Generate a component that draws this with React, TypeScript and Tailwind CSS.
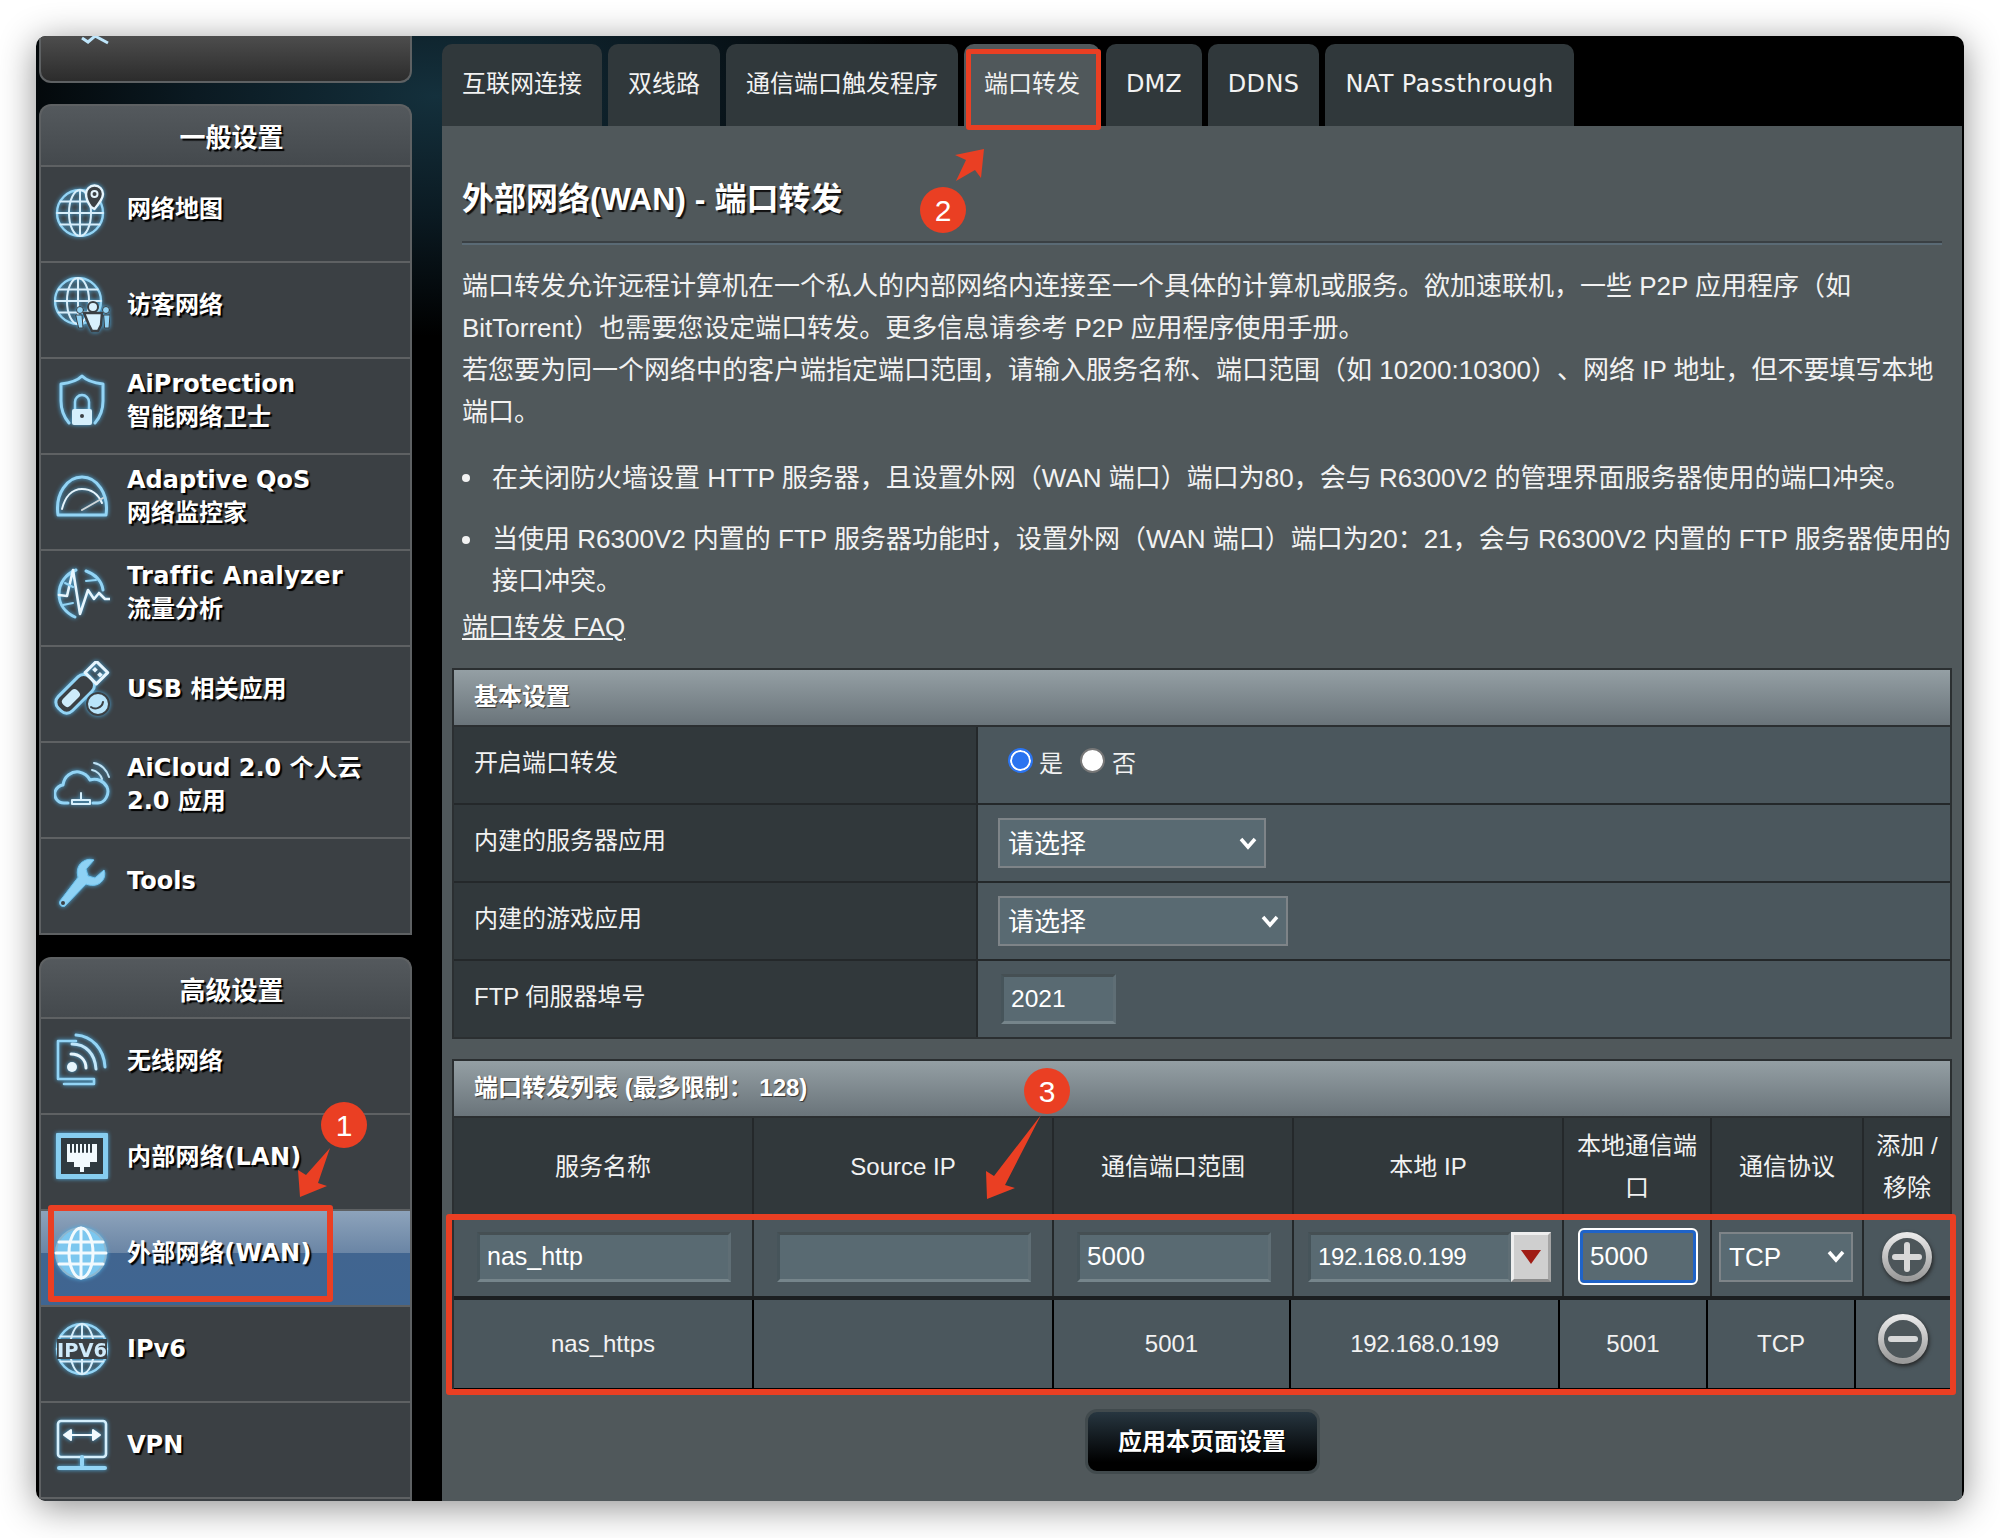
import React from "react";

const blue = "#93d4f5";
const iconCls = "block drop-shadow-[0_0_2px_#4fb0e6]";
const Ic = ({ children }: { children: React.ReactNode }) => (
  <svg width="56" height="56" viewBox="0 0 56 56" fill="none" stroke={blue} strokeWidth="2" strokeLinecap="round" strokeLinejoin="round" className={iconCls}>
    {children}
  </svg>
);
const Grid = ({ cx, cy, r }: { cx: number; cy: number; r: number }) => (
  <>
    <circle cx={cx} cy={cy} r={r} strokeWidth="2.4" />
    <ellipse cx={cx} cy={cy} rx={r * 0.48} ry={r} stroke="#d7eefb" />
    <path d={`M${cx} ${cy - r}V${cy + r}M${cx - r} ${cy}H${cx + r}M${cx - r * 0.85} ${cy - r * 0.5}H${cx + r * 0.85}M${cx - r * 0.85} ${cy + r * 0.5}H${cx + r * 0.85}`} stroke="#d7eefb" />
  </>
);
const icons: Record<string, React.ReactNode> = {
  map: (
    <Ic>
      <Grid cx={26} cy={32} r={23} />
      <path d="M37 26C32 19 32 16 32 13a8.500 8.500 0 0 1 17 0c0 3-1 6-8.500 15z" fill="#3b4044" stroke="#e6f5fd" strokeWidth="2.400" />
      <circle cx="40.500" cy="13" r="3" stroke="#e6f5fd" />
    </Ic>
  ),
  guest: (
    <Ic>
      <Grid cx={24} cy={24} r={23} />
      <circle cx="39" cy="30" r="5" fill="#d9f1fd" stroke="#3b4044" />
      <path d="M30 36h18l-1 12-3 6h-6l-3-6z" fill="#d9f1fd" stroke="#3b4044" strokeWidth="2.500" />
      <circle cx="26" cy="33" r="3.500" fill={blue} stroke="#3b4044" strokeWidth="1" />
      <circle cx="52" cy="33" r="3.500" fill={blue} stroke="#3b4044" strokeWidth="1" />
      <path d="M22 38h6l1 13h-4zM50 38h6l-1 13h-4z" fill={blue} stroke="#3b4044" strokeWidth="1" />
    </Ic>
  ),
  shield: (
    <Ic>
      <path d="M28 3c5 5 12 7 21 8v17c0 9-2 15-8 22M28 3c-5 5-12 7-21 8v17c0 9 2 15 8 22" strokeWidth="3" />
      <path d="M21 36v-7a7 7 0 0 1 14 0v7" strokeWidth="2.500" />
      <rect x="18" y="36" width="20" height="16" rx="2" fill="#d5effc" stroke="none" />
      <circle cx="28" cy="43" r="2" fill="#3b4044" stroke="none" />
    </Ic>
  ),
  qos: (
    <Ic>
      <path d="M4 46h48C55 25 43 8 28 8S1 25 4 46z" strokeWidth="3" />
      <path d="M8 40C11 28 18 20 28 20s16 5 20 14" stroke="#e6f5fd" strokeWidth="2" />
      <path d="M28 41l21-12" stroke="#cfd5d8" strokeWidth="2" />
    </Ic>
  ),
  traffic: (
    <Ic>
      <path d="M22 5C12 9 5 18 5 29c0 11 7 19 16 23M32 6c9 3 16 10 17 19" stroke={blue} strokeWidth="3" />
      <path d="M5 30l8 1 6-26 7 44 8-24 6 9 5-6 6 6h5" stroke="#e6f5fd" strokeWidth="2.600" />
      <path d="M11 18l8 4M32 16l10-1M9 40l10-2" />
    </Ic>
  ),
  usb: (
    <Ic>
      <g transform="rotate(45 24 30)">
        <rect x="14" y="12" width="20" height="44" rx="8" strokeWidth="3" fill="#3b4044" />
        <rect x="19" y="30" width="10" height="20" rx="4" fill="#cdecfb" stroke="none" />
        <rect x="16" y="-4" width="16" height="16" stroke="#e6f5fd" strokeWidth="3" strokeLinecap="square" />
        <rect x="19" y="1" width="4" height="4" fill="#e6f5fd" stroke="none" />
        <rect x="26" y="1" width="4" height="4" fill="#e6f5fd" stroke="none" />
      </g>
      <circle cx="44" cy="43" r="11" fill="#b9e4fa" stroke="#3b4044" strokeWidth="2" />
      <path d="M37 46c4 3 11 1 12-5" stroke="#3b4044" strokeWidth="2" />
    </Ic>
  ),
  cloud: (
    <Ic>
      <path d="M14 46H10C3 46 0 40 1 35c1-4 5-7 8-7 1-9 9-14 16-13 5 1 9 4 11 8 7-2 14 1 17 7 3 7-2 16-9 16h-5" strokeWidth="3" />
      <path d="M38 13c5 1 9 5 10 9M40 6c7 1 13 7 15 14" stroke="#bfe2f5" />
      <path d="M18 47h18v-4H18zM27 43v-7" stroke="#d5effc" />
    </Ic>
  ),
  tools: (
    <Ic>
      <path d="M6 48c-2 3 2 7 5 5l21-22c7 3 15 1 18-6 1-3 1-6 0-8l-9 8-7-2-2-7 8-9c-3-1-7-1-10 1-6 3-8 10-6 16z" fill="#8ed2f5" stroke="#6fc3ee" strokeWidth="1" />
      <circle cx="9" cy="50" r="2" fill="#3b4044" stroke="none" />
    </Ic>
  ),
  wifi: (
    <Ic>
      <path d="M22 8H4v38h36v5H10" strokeWidth="2.600" />
      <circle cx="18" cy="34" r="5" fill="#e6f5fd" stroke="none" />
      <path d="M17 21c9 0 15 6 15 14" stroke="#e6f5fd" strokeWidth="3" />
      <path d="M18 11c14 0 23 10 24 25" stroke="#c0e6fa" strokeWidth="3" />
      <path d="M22 2c16 1 28 14 29 32" strokeWidth="3" />
    </Ic>
  ),
  lan: (
    <Ic>
      <rect x="3" y="5" width="50" height="44" fill="#86cdf0" stroke="#86cdf0" />
      <rect x="7" y="9" width="42" height="36" fill="#2f3a40" stroke="none" />
      <path d="M13 15h30v18H36v5h-6v5h-4v-5h-6v-5h-7z" fill="#f2fafe" stroke="none" />
      <path d="M17 15v8M21 15v8M25 15v8M29 15v8M33 15v8M37 15v8" stroke="#2f3a40" strokeWidth="2" />
    </Ic>
  ),
  wan: (
    <Ic>
      <circle cx="27" cy="28" r="25" fill="#7cc7ef" stroke="#8db7d0" strokeWidth="2" />
      <ellipse cx="27" cy="28" rx="12" ry="25" stroke="#f2fafe" strokeWidth="3" />
      <path d="M27 3v50M2 28h50M5 17h44M5 39h44" stroke="#f2fafe" strokeWidth="3" />
    </Ic>
  ),
  ipv6: (
    <Ic>
      <Grid cx={28} cy={28} r={25} />
      <rect x="3" y="18" width="50" height="20" fill="#3b4044" stroke="none" />
      <text x="28" y="36" textAnchor="middle" fontFamily="'DejaVu Sans',sans-serif" fontWeight="700" fontSize="19" textLength="50" lengthAdjust="spacingAndGlyphs" fill="#cfeafa" stroke="none">IPV6</text>
    </Ic>
  ),
  vpn: (
    <Ic>
      <rect x="4" y="4" width="48" height="36" rx="3" stroke="#d5effc" strokeWidth="2.600" />
      <path d="M10 18h36M10 18l7-5v10zM46 18l-7-5v10z" fill="#f2fafe" stroke="#f2fafe" strokeWidth="2" />
      <path d="M28 40v8" strokeWidth="4" />
      <path d="M5 51h46" strokeWidth="4" />
    </Ic>
  ),
};

const sideText = "[font-family:'DejaVu_Sans','Noto_Sans_CJK_SC',sans-serif] font-bold text-[24px] leading-[33px] text-white [text-shadow:2px_2px_1px_#000]";

const Item = ({ icon, lines, active }: { icon: string; lines: string[]; active?: boolean }) => (
  <div className={`flex h-[96px] items-start border-t-2 border-[#5e6163] pl-[13px] ${active ? "bg-[linear-gradient(#8da3bb,#6a85a5_45%,#416590_45%,#3f6591)]" : "bg-[#3b4044]"}`}>
    <div className="flex h-[84px] w-[56px] shrink-0 items-center">{icons[icon]}</div>
    <div className={`ml-[17px] flex h-[84px] flex-col justify-center whitespace-nowrap ${sideText}`}>
      {lines.map((l) => (
        <div key={l} className={l.includes("(") || l.startsWith("Traffic") ? "tracking-[0.3px]" : ""}>{l}</div>
      ))}
    </div>
  </div>
);

const Header = ({ t, h }: { t: string; h: string }) => (
  <div className={`flex items-center justify-center rounded-t-[12px] border-x-2 border-t-2 border-[#5e6163] bg-[linear-gradient(#54595d,#44494d)] pl-[12px] pt-[6px] ${h} ${sideText} text-[26px]`}>
    {t}
  </div>
);

const Sidebar = () => (
  <div className="w-[373px] shrink-0">
    <div className="relative h-[47px] overflow-hidden rounded-b-[12px] border-x-2 border-b-2 border-[#5e6163] bg-[linear-gradient(#4d4d4d,#2c2c2c)]">
      <svg width="34" height="10" viewBox="0 0 34 10" className="absolute left-[39px] top-0">
        <path d="M2 2L8 6L15 0L28 7" stroke="#bfe6fb" strokeWidth="3" fill="none" />
      </svg>
    </div>
    <div className="mt-[21px]">
      <Header t="一般设置" h="h-[61px]" />
      <div className="border-x-2 border-b-2 border-[#5e6163]">
        <Item icon="map" lines={["网络地图"]} />
        <Item icon="guest" lines={["访客网络"]} />
        <Item icon="shield" lines={["AiProtection", "智能网络卫士"]} />
        <Item icon="qos" lines={["Adaptive QoS", "网络监控家"]} />
        <Item icon="traffic" lines={["Traffic Analyzer", "流量分析"]} />
        <Item icon="usb" lines={["USB 相关应用"]} />
        <Item icon="cloud" lines={["AiCloud 2.0 个人云", "2.0 应用"]} />
        <Item icon="tools" lines={["Tools"]} />
      </div>
    </div>
    <div className="mt-[22px]">
      <Header t="高级设置" h="h-[60px]" />
      <div className="border-x-2 border-[#5e6163]">
        <Item icon="wifi" lines={["无线网络"]} />
        <Item icon="lan" lines={["内部网络(LAN)"]} />
        <Item icon="wan" lines={["外部网络(WAN)"]} active />
        <Item icon="ipv6" lines={["IPv6"]} />
        <Item icon="vpn" lines={["VPN"]} />
        <div className="h-[10px] border-t-2 border-[#5e6163] bg-[#3b4044]" />
      </div>
    </div>
  </div>
);

const tabs = ["互联网连接", "双线路", "通信端口触发程序", "端口转发", "DMZ", "DDNS", "NAT Passthrough"];

const Tabs = () => (
  <div className="flex h-[90px] items-end gap-[6px]">
    {tabs.map((t) => (
      <div
        key={t}
        className={`flex h-[82px] items-center rounded-t-[10px] px-5 pb-[2px] [font-family:'DejaVu_Sans','Noto_Sans_CJK_SC',sans-serif] text-[24px] text-[#f2f2f2] ${t === "端口转发" ? "bg-[#50585b]" : "bg-[#30383b]"} ${t === "NAT Passthrough" || t === "DDNS" ? "tracking-[0.4px]" : ""}`}
      >
        {t}
      </div>
    ))}
  </div>
);

const Inp = ({ w, children, cls = "" }: { w: string; children?: React.ReactNode; cls?: string }) => (
  <div className={`flex h-[50px] items-center border-[3px] border-b-[#76858b] border-l-[#46545a] border-r-[#5f6e75] border-t-[#454f53] bg-[#596a72] pl-[7px] text-[26px] text-white ${w} ${cls}`}>
    {children}
  </div>
);

const Chevron = () => (
  <svg width="18" height="13" viewBox="0 0 18 13" className="shrink-0">
    <path d="M2 2l7 8 7-8" stroke="#fff" strokeWidth="3.500" fill="none" />
  </svg>
);

const Sel = ({ w, t, pr }: { w: string; t: string; pr: string }) => (
  <div className={`flex h-[50px] items-center justify-between border-2 border-[#7e8488] bg-[#596a72] pl-[8px] text-[26px] text-white ${w} ${pr}`}>
    <span className="pt-[2px]">{t}</span>
    <Chevron />
  </div>
);

const secHead = "flex h-[57px] items-center border-b-2 border-[#2b2f31] bg-[linear-gradient(#949fa4,#6a747a)] pl-5 pb-[2px] text-[24px] font-bold text-white [text-shadow:1px_1px_1px_#333]";

const BasicRow = ({ label, children, last }: { label: string; children: React.ReactNode; last?: boolean }) => (
  <div className={`grid grid-cols-[524px_1fr] ${last ? "h-[76px]" : "h-[78px] border-b-2 border-[#24282a]"}`}>
    <div className="flex items-center border-r-2 border-[#24282a] bg-[#31383b] pb-[4px] pl-5 text-[24px] text-[#f2f2f2]">{label}</div>
    <div className="flex items-center bg-[#4b575d]">{children}</div>
  </div>
);

const Radio = ({ on }: { on?: boolean }) => (
  <span className={`block h-[25px] w-[25px] rounded-full ${on ? "border-2 border-[#2b74f0] bg-[#2b74f0] shadow-[inset_0_0_0_2px_#fff]" : "border-2 border-[#777] bg-white"}`} />
);

const c1 = "grid grid-cols-[300px_300px_240px_270px_148px_152px_86px]";
const c2 = "grid grid-cols-[300px_300px_237px_269px_148px_148px_94px]";

const Round = ({ minus }: { minus?: boolean }) => (
  <svg width="56" height="56" viewBox="0 0 56 56" className="block drop-shadow-[1px_2px_2px_#222]">
    <defs>
      <linearGradient id={minus ? "rm" : "rp"} x1="0" y1="0" x2="0" y2="1">
        <stop offset="0" stopColor="#e8e8e8" />
        <stop offset="1" stopColor="#9a9a9a" />
      </linearGradient>
    </defs>
    <circle cx="28" cy="28" r="22" fill="#4d565a" stroke={`url(#${minus ? "rm" : "rp"})`} strokeWidth="6" />
    <path d={minus ? "M16 28h24" : "M16 28h24M28 16v24"} stroke="#d8d8d8" strokeWidth="6" strokeLinecap="round" fill="none" />
  </svg>
);

const HeadCell = ({ children }: { children: React.ReactNode }) => (
  <div className="flex items-center justify-center border-r-2 border-[#24282a] text-center leading-[42px] last:border-r-0">{children}</div>
);

const Main = () => (
  <div className="flex w-[1520px] flex-col">
    <Tabs />
    <div className="h-[1375px] bg-[#50585b] text-[#f2f2f2]">
      <div className="mx-5 pt-[53px] text-[32px] font-bold leading-[40px] text-white [text-shadow:2px_2px_1px_#111]">外部网络(WAN) - 端口转发</div>
      <div className="mx-5 mt-[22px] border-t-2 border-b-2 border-t-[#3a4044] border-b-[#5a6a75]" />
      <div className="ml-5 mt-[20px] whitespace-nowrap text-[26px] leading-[42px]">
        端口转发允许远程计算机在一个私人的内部网络内连接至一个具体的计算机或服务。欲加速联机，一些 P2P 应用程序（如
        <br />
        BitTorrent）也需要您设定端口转发。更多信息请参考 P2P 应用程序使用手册。
        <br />
        若您要为同一个网络中的客户端指定端口范围，请输入服务名称、端口范围（如 10200:10300）、网络 IP 地址，但不要填写本地
        <br />
        端口。
      </div>
      <div className="ml-5 mt-[24px] flex items-center whitespace-nowrap text-[26px] leading-[42px]">
        <span className="mr-[22px] h-[8px] w-[8px] rounded-full bg-[#f2f2f2]" />
        在关闭防火墙设置 HTTP 服务器，且设置外网（WAN 端口）端口为80，会与 R6300V2 的管理界面服务器使用的端口冲突。
      </div>
      <div className="ml-5 mt-[19px] flex items-start whitespace-nowrap text-[26px] leading-[42px]">
        <span className="mr-[22px] mt-[18px] h-[8px] w-[8px] rounded-full bg-[#f2f2f2]" />
        <div>
          当使用 R6300V2 内置的 FTP 服务器功能时，设置外网（WAN 端口）端口为20：21，会与 R6300V2 内置的 FTP 服务器使用的
          <br />
          接口冲突。
        </div>
      </div>
      <div className="ml-5 mt-[4px] text-[26px] leading-[42px] underline">端口转发 FAQ</div>

      <div className="ml-[10px] mt-[20px] w-[1500px] border-2 border-[#2b2f31]">
        <div className={secHead}>基本设置</div>
        <BasicRow label="开启端口转发">
          <div className="flex items-center pb-[10px] pl-[30px] text-[24px]">
            <Radio on />
            <span className="ml-[6px] mt-[8px]">是</span>
            <span className="ml-[17px]"><Radio /></span>
            <span className="ml-[7px] mt-[8px]">否</span>
          </div>
        </BasicRow>
        <BasicRow label="内建的服务器应用">
          <div className="pl-[20px]"><Sel w="w-[268px]" t="请选择" pr="pr-[7px]" /></div>
        </BasicRow>
        <BasicRow label="内建的游戏应用">
          <div className="pl-[20px]"><Sel w="w-[290px]" t="请选择" pr="pr-[7px]" /></div>
        </BasicRow>
        <BasicRow label="FTP 伺服器埠号" last>
          <div className="pl-[23px]"><Inp w="w-[115px]"><span className="text-[24.500px]">2021</span></Inp></div>
        </BasicRow>
      </div>

      <div className="ml-[10px] mt-[20px] w-[1500px] border-2 border-[#2b2f31]">
        <div className={secHead}>端口转发列表 (最多限制： 128)</div>
        <div className={`${c1} h-[97px] bg-[#31383b] text-[24px] text-[#f2f2f2]`}>
          <HeadCell>服务名称</HeadCell>
          <HeadCell>Source IP</HeadCell>
          <HeadCell>通信端口范围</HeadCell>
          <HeadCell>本地 IP</HeadCell>
          <HeadCell>本地通信端<br />口</HeadCell>
          <HeadCell>通信协议</HeadCell>
          <HeadCell>添加 /<br />移除</HeadCell>
        </div>
        <div className={`${c1} h-[85px] border-b-4 border-[#1c1f21] bg-[#4b575d]`}>
          <div className="flex items-center border-r-2 border-[#24282a] pl-[23px] pt-[2px]"><Inp w="w-[254px]"><span className="text-[25px]">nas_http</span></Inp></div>
          <div className="flex items-center border-r-2 border-[#24282a] pl-[23px] pt-[2px]"><Inp w="w-[254px]" /></div>
          <div className="flex items-center border-r-2 border-[#24282a] pl-[23px] pt-[2px]"><Inp w="w-[194px]">5000</Inp></div>
          <div className="flex items-center border-r-2 border-[#24282a] pl-[14px] pt-[2px]">
            <Inp w="w-[203px]"><span className="text-[24px] tracking-[-0.4px]">192.168.0.199</span></Inp>
            <div className="flex h-[50px] w-[40px] items-center justify-center border-[3px] border-b-[#8c8c8c] border-l-[#eee] border-r-[#a5a5a5] border-t-[#eee] bg-[#cfcfcf]">
              <svg width="20" height="14" viewBox="0 0 20 14"><path d="M0 0h20L10 14z" fill="#a01c14" /></svg>
            </div>
          </div>
          <div className="flex items-center border-r-2 border-[#24282a] pl-[14px] pt-[2px]">
            <div className="flex h-[57px] w-[120px] items-center rounded-[6px] border-2 border-white bg-[#596a72] pl-[10px] text-[26px] text-white shadow-[inset_0_0_0_3px_#1f63c8]">5000</div>
          </div>
          <div className="flex items-center border-r-2 border-[#24282a] pl-[7px] pt-[2px]">
            <Sel w="w-[134px]" t="TCP" pr="pr-[6px]" />
          </div>
          <div className="flex items-center justify-center pt-[2px]"><Round /></div>
        </div>
        <div className={`${c2} h-[90px] border-b-2 border-black bg-[#4b575d] text-[24px] text-[#f2f2f2]`}>
          <div className="flex items-center justify-center border-r-2 border-black">nas_https</div>
          <div className="border-r-2 border-black" />
          <div className="flex items-center justify-center border-r-2 border-black">5001</div>
          <div className="flex items-center justify-center border-r-2 border-black tracking-[-0.4px]">192.168.0.199</div>
          <div className="flex items-center justify-center border-r-2 border-black">5001</div>
          <div className="flex items-center justify-center border-r-2 border-black">TCP</div>
          <div className="flex items-center justify-center pb-[10px]"><Round minus /></div>
        </div>
      </div>

      <div className="mx-auto mt-[17px] flex h-[65px] w-[235px] items-center justify-center rounded-[12px] border-[3px] border-[#414a4d] bg-[linear-gradient(#273640,#000_85%)] text-[24px] font-bold text-white [text-shadow:1px_1px_1px_#000]">
        应用本页面设置
      </div>
    </div>
  </div>
);

const Badge = ({ n, cls }: { n: string; cls: string }) => (
  <div className={`absolute flex h-[46px] w-[46px] items-center justify-center rounded-full bg-[#ea3f23] text-[30px] text-white ${cls}`}>{n}</div>
);

export default function App() {
  return (
    <div lang="zh-CN" className="relative h-[1538px] w-[2000px] overflow-hidden bg-white pl-[36px] pt-[36px] [font-family:'Liberation_Sans','Noto_Sans_CJK_SC',sans-serif] [text-spacing-trim:space-all]">
      <div className="flex h-[1465px] w-[1928px] gap-[27px] overflow-hidden rounded-[10px] bg-[radial-gradient(ellipse_480px_240px_at_400px_60px,#14303c,#0b1a22_50%,#000)] pl-[3px] shadow-[0_6px_36px_rgba(0,0,0,0.45)]">
        <Sidebar />
        <div className="flex">
          <div className="w-[3px]" />
          <Main />
        </div>
      </div>

      <div className="absolute left-[48px] top-[1205px] h-[97px] w-[285px] rounded-[3px] border-[6px] border-[#ea3f23]" />
      <div className="absolute left-[966px] top-[49px] h-[81px] w-[135px] rounded-[3px] border-[5px] border-[#ea3f23]" />
      <div className="absolute left-[446px] top-[1214px] h-[181px] w-[1510px] rounded-[3px] border-[6px] border-[#ea3f23]" />
      <svg width="2000" height="1538" viewBox="0 0 2000 1538" className="absolute left-0 top-0">
        <polygon points="330,1148 318,1183 327,1186 300,1197 298,1170 306,1175" fill="#ea3f23" />
        <polygon points="984,149 981,178 975,170 956,181 966,160 955,155" fill="#ea3f23" />
        <polygon points="1041,1115 1005,1185 1015,1188 987,1199 986,1171 994,1176" fill="#ea3f23" />
      </svg>
      <Badge n="1" cls="left-[321px] top-[1102px]" />
      <Badge n="2" cls="left-[920px] top-[187px]" />
      <Badge n="3" cls="left-[1024px] top-[1068px]" />
    </div>
  );
}
